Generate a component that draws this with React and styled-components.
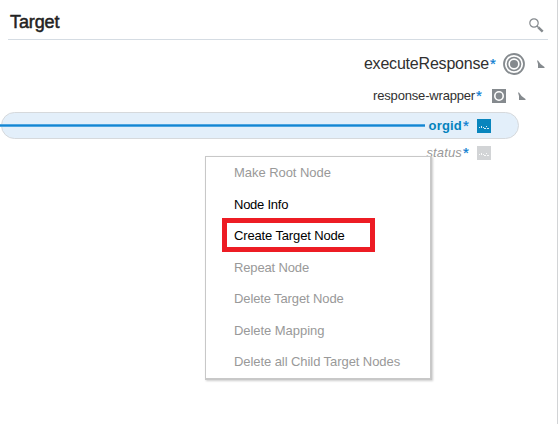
import React from "react";
import styled, { createGlobalStyle } from "styled-components";

const GlobalStyle = createGlobalStyle`
  * { box-sizing: border-box; }
  body { margin: 0; background: #fff; font-family: "Liberation Sans", Arial, sans-serif; }
`;

const Panel = styled.main`
  position: relative;
  width: 558px;
  height: 424px;
  border-right: 1px solid #d2d4d6;
  overflow: hidden;
`;

const Header = styled.header`
  display: flex;
  justify-content: space-between;
  height: 40px;
  margin: 0 9px 0 8px;
  padding: 11px 4px 0 2px;
  border-bottom: 1px solid #d5dce3;
`;

const Title = styled.h1`
  margin: 0;
  font-size: 18px;
  line-height: 22px;
  font-weight: 400;
  letter-spacing: -0.1px;
  color: #222;
  -webkit-text-stroke: 0.5px #222;
`;

const SearchIcon = styled.svg`
  width: 15px;
  height: 15px;
  margin-top: 7px;
`;

const Tree = styled.div`
  display: flex;
  flex-direction: column;
  padding-top: 8px;
`;

const Row = styled.div`
  display: flex;
  align-items: center;
  justify-content: flex-end;
  height: ${(p) => p.$height}px;
  padding-right: ${(p) => p.$inset}px;
`;

const SelectedRow = styled(Row)`
  width: 518px;
  margin-left: 1px;
  border: 1px solid #d6d9dc;
  border-radius: 14px;
  background: #e3effa;
`;

const MappingLine = styled.span`
  flex: 1;
  height: 3px;
  margin: -1px 4px 0 -2px;
  background: linear-gradient(#4ea5e0 1px, #1485d2 1px 2px, #4ea5e0 2px);
`;

const Label = styled.span`
  font-size: ${(p) => p.$size}px;
  line-height: 20px;
  letter-spacing: ${(p) => p.$spacing || 0}px;
  font-weight: ${(p) => (p.$selected ? 700 : 400)};
  font-style: ${(p) => (p.$muted ? "italic" : "normal")};
  color: ${(p) => (p.$selected ? "#0583bd" : p.$muted ? "#999" : "#303030")};
  white-space: nowrap;
`;

const Required = styled.span`
  width: 8px;
  margin-right: ${(p) => p.$gap}px;
  padding-left: 1px;
  font-size: 15px;
  line-height: 20px;
  color: #087bd0;
  -webkit-text-stroke: 0.2px #087bd0;
`;

const NodeIcon = styled.svg`
  flex: none;
  width: ${(p) => p.$size}px;
  height: ${(p) => p.$size}px;
`;

const Toggle = styled.svg`
  flex: none;
  width: 8px;
  height: 8px;
  margin: -1px 0 0 12px;
`;

const Menu = styled.ul`
  position: absolute;
  left: 205px;
  top: 156px;
  width: 227px;
  height: 224px;
  margin: 0;
  padding: 0 0 0 28px;
  list-style: none;
  background: #fff;
  border: 1px solid #c8c8c8;
  border-right-width: 2px;
  border-bottom-width: 2px;
  box-shadow: 1px 1px 2px rgba(0, 0, 0, 0.2);
`;

const MenuItem = styled.li`
  height: 31.5px;
  font-size: 13px;
  line-height: 32px;
  letter-spacing: ${(p) => p.$spacing}px;
  color: ${(p) => (p.$enabled ? "#000" : "#999")};
  white-space: nowrap;
`;

const Highlight = styled.div`
  position: absolute;
  left: 222px;
  top: 218px;
  width: 153px;
  height: 34px;
  border: 5px solid #ed1c24;
`;

const items = [
  { text: "Make Root Node", spacing: -0.05 },
  { text: "Node Info", enabled: true, spacing: -0.25 },
  { text: "Create Target Node", enabled: true, spacing: -0.14 },
  { text: "Repeat Node", spacing: -0.15 },
  { text: "Delete Target Node", spacing: -0.12 },
  { text: "Delete Mapping", spacing: -0.05 },
  { text: "Delete all Child Target Nodes", spacing: -0.07 },
];

function Search() {
  return (
    <SearchIcon viewBox="0 0 15 15">
      <circle cx="5" cy="5" r="4.2" fill="none" stroke="#858a8e" strokeWidth="1.2" />
      <path d="M8 8L9.5 9.5" stroke="#858a8e" strokeWidth="1.4" />
      <path d="M9.3 9.3L13.7 13.7" stroke="#858a8e" strokeWidth="2.5" />
    </SearchIcon>
  );
}

function RootIcon() {
  return (
    <NodeIcon $size={22} viewBox="0 0 22 22">
      <g fill="none" stroke="#858a8e">
        <circle cx="11" cy="11" r="10" strokeWidth="1.8" />
        <circle cx="11" cy="11" r="6.5" strokeWidth="1.7" />
      </g>
      <circle cx="11" cy="11" r="4" fill="#858a8e" />
    </NodeIcon>
  );
}

function WrapperIcon() {
  return (
    <NodeIcon $size={14} viewBox="0 0 14 14">
      <path d="M0 0h14v14H0z" fill="#858a8e" />
      <circle cx="7" cy="7" r="4.2" fill="none" stroke="#fff" strokeWidth="1.6" />
    </NodeIcon>
  );
}

function FieldIcon({ color }) {
  return (
    <NodeIcon $size={14} viewBox="0 0 14 14" shapeRendering="crispEdges">
      <path d="M0 0h14v14H0z" fill={color} />
      <path d="M2 8h1v1H2zM4 7h1v2H4zM6 8h1v1H6zM7 9h2v1H7zM9 7h1v1H9zM10 9h2v1h-2z" fill="#fff" opacity=".85" />
    </NodeIcon>
  );
}

function Expander() {
  return (
    <Toggle viewBox="0 0 8 8">
      <path d="M0 0.5H1Q3 4.5 7.5 7V8H1V4z" fill="#858a8e" />
    </Toggle>
  );
}

export default function App() {
  return (
    <>
      <GlobalStyle />
      <Panel>
        <Header>
          <Title>Target</Title>
          <Search />
        </Header>
        <Tree>
          <Row $height={32} $inset={12}>
            <Label $size={16} $spacing={-0.2}>executeResponse</Label>
            <Required $gap={6}>*</Required>
            <RootIcon />
            <Expander />
          </Row>
          <Row $height={32} $inset={31}>
            <Label $size={13} $spacing={-0.18}>response-wrapper</Label>
            <Required $gap={9}>*</Required>
            <WrapperIcon />
            <Expander />
          </Row>
          <SelectedRow $height={27} $inset={27}>
            <MappingLine />
            <Label $size={13} $spacing={0.2} $selected>orgid</Label>
            <Required $gap={7}>*</Required>
            <FieldIcon color="#0885bd" />
          </SelectedRow>
          <Row $height={28} $inset={66}>
            <Label $size={13} $spacing={0.15} $muted>status</Label>
            <Required $gap={7}>*</Required>
            <FieldIcon color="#d2d4d6" />
          </Row>
        </Tree>
        <Menu>
          {items.map((item) => (
            <MenuItem key={item.text} $enabled={item.enabled} $spacing={item.spacing}>
              {item.text}
            </MenuItem>
          ))}
        </Menu>
        <Highlight />
      </Panel>
    </>
  );
}
